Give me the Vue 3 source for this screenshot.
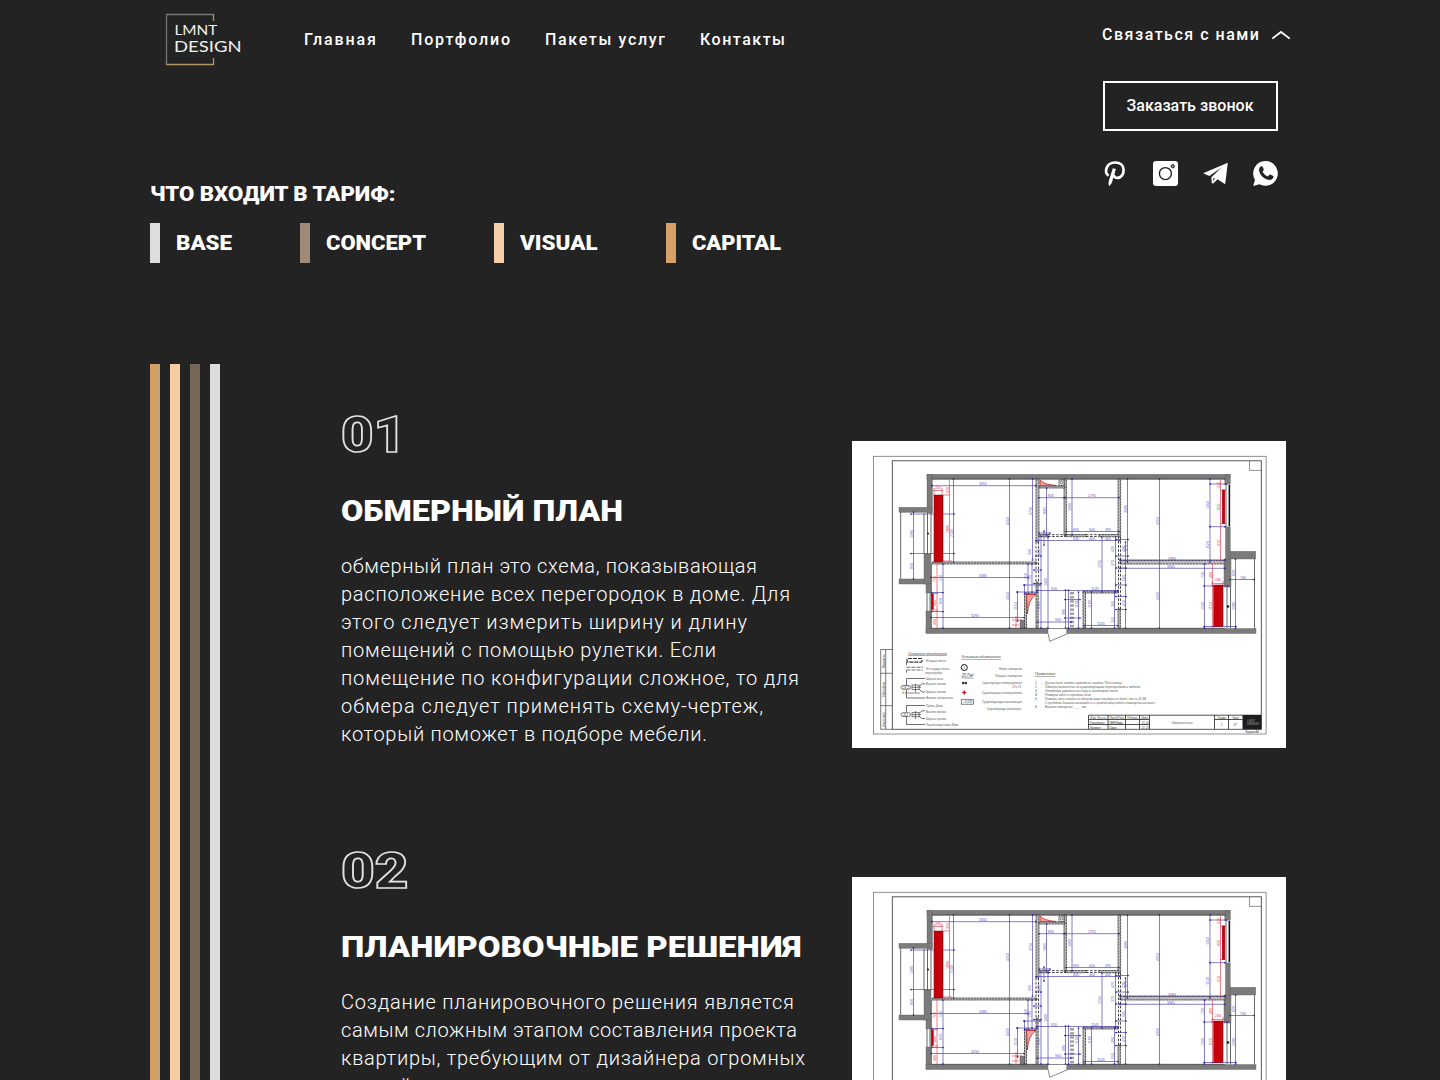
<script setup>
const nav = [
  { label: 'Главная', width: 72 },
  { label: 'Портфолио', width: 99 },
  { label: 'Пакеты услуг', width: 120 },
  { label: 'Контакты', width: 85 },
]

const tariffs = [
  { name: 'BASE', width: 56, gap: 68, tone: 'base' },
  { name: 'CONCEPT', width: 100, gap: 68, tone: 'concept' },
  { name: 'VISUAL', width: 77.5, gap: 68.5, tone: 'visual' },
  { name: 'CAPITAL', width: 89, gap: 0, tone: 'capital' },
]

const sections = [
  {
    number: '01',
    numberWidth: 65,
    title: 'ОБМЕРНЫЙ ПЛАН',
    titleWidth: 282,
    lines: [
      ['обмерный план это схема, показывающая', 416],
      ['расположение всех перегородок в доме. Для', 449],
      ['этого следует измерить ширину и длину', 406],
      ['помещений с помощью рулетки. Если', 375],
      ['помещение по конфигурации сложное, то для', 458],
      ['обмера следует применять схему-чертеж,', 422],
      ['который поможет в подборе мебели.', 366],
    ],
  },
  {
    number: '02',
    numberWidth: 67.5,
    title: 'ПЛАНИРОВОЧНЫЕ РЕШЕНИЯ',
    titleWidth: 460.5,
    lines: [
      ['Создание планировочного решения является', 453],
      ['самым сложным этапом составления проекта', 456],
      ['квартиры, требующим от дизайнера огромных', 464],
      ['усилий и затрат времени.', 262],
    ],
  },
]

// Fits a line of text to the given width, by letter spacing or by widening the glyphs.
const vFit = {
  mounted(el, { value, modifiers }) {
    el.style.width = 'auto'
    const natural = el.getBoundingClientRect().width
    el.style.width = `${value}px`
    if (modifiers.stretch) {
      el.style.transform = `scaleX(${value / natural})`
      return
    }
    const count = el.textContent.length - 1
    el.style.letterSpacing = `${(value - natural) / count}px`
  },
}

// Floor plan geometry: [x, y, width, height]
const walls = [
  [927, 474.3, 303, 4.7], [927, 474.3, 5, 38.7], [899, 507.3, 33, 5], [899, 579, 27, 5],
  [924, 554, 7, 30], [926, 584, 5, 9], [926, 611, 5, 22], [926, 628.5, 122, 5],
  [1067, 628.5, 189, 5], [1225.5, 474.3, 4.7, 10], [1225.5, 527, 4.7, 34],
  [1224, 559, 7, 28], [1230, 551.3, 25.7, 7.7], [1020, 620, 4.5, 9],
]
const thinWalls = [
  [1036, 479, 3, 63], [1064, 479, 2.4, 57], [1118, 479, 2.6, 58], [1039, 486, 26, 2],
  [1066, 534.5, 20, 2.2], [1099, 534.5, 20, 2.2], [1039, 534.5, 9, 2.2], [932, 562, 105, 2],
  [1120, 560.5, 105, 3.5], [1024.5, 593, 11, 1.5], [1024.5, 593, 2, 35], [1036, 582, 2.2, 46],
  [1083, 591, 35, 2], [1083, 592, 2.5, 36], [1118, 609, 2.4, 19],
]
const dashed = [
  [1036, 542, 1036, 583], [1038.5, 542, 1038.5, 583], [1118.5, 537, 1118.5, 609],
  [1120.5, 537, 1120.5, 609], [1071, 592, 1071, 628], [1073, 592, 1073, 628],
  [1048, 534.7, 1066, 534.7], [1048, 536.5, 1066, 536.5],
  [1086, 534.7, 1099, 534.7], [1086, 536.5, 1099, 536.5],
]
const dims = [
  [932, 485.7, 1036, 485.7], [953.5, 479, 953.5, 562], [1009.5, 479, 1009.5, 628],
  [1032.5, 479, 1032.5, 560], [913.5, 512, 913.5, 579], [911, 514, 954, 514], [911, 553.5, 954, 553.5],
  [931, 577.5, 1028, 577.5], [943, 564, 943, 628], [931, 617.5, 1024, 617.5],
  [932, 592.5, 943, 592.5], [932, 611.5, 943, 611.5], [1017.5, 592, 1017.5, 621],
  [1017, 592, 1037, 592], [1024.5, 585, 1024.5, 594], [1024, 585, 1040, 585],
  [1028, 564, 1028, 594], [1032, 564, 1032, 592], [1039, 497.7, 1064, 497.7],
  [1046.5, 488, 1046.5, 535], [1041, 536, 1041, 628], [1048, 537, 1048, 628],
  [1072, 479, 1072, 535], [1065, 497.7, 1119, 497.7], [1127.5, 479, 1127.5, 562],
  [1159.5, 479, 1159.5, 628], [1120, 568.3, 1225, 568.3], [1120, 559.9, 1225, 559.9],
  [1210, 479, 1210, 562], [1210, 484, 1226, 484], [1210, 526.7, 1225, 526.7],
  [1204.5, 564, 1204.5, 628], [1204, 586, 1228, 586], [1204, 626.5, 1236, 626.5],
  [1235.5, 559, 1235.5, 628], [1230, 579.5, 1254, 579.5], [1102, 537, 1102, 592],
  [1036, 540.5, 1120, 540.5], [1066, 531.5, 1119, 531.5], [1115.5, 537, 1115.5, 592],
  [1125.5, 542, 1125.5, 628], [1116, 539.5, 1128, 539.5], [1116, 556, 1128, 556],
  [1116, 568, 1126, 568], [1116, 585, 1126, 585], [1116, 596.5, 1126, 596.5],
  [1116, 609.5, 1126, 609.5], [1037, 590.5, 1118, 590.5], [1065.5, 590, 1065.5, 628],
  [1078.5, 592, 1078.5, 628], [1091.5, 592, 1091.5, 628], [1114.5, 592, 1114.5, 628],
  [1037, 622, 1071, 622], [1084, 625.5, 1118, 625.5], [1068.5, 590, 1068.5, 628],
  [1036, 556, 1041, 556], [1034, 570, 1041, 570], [1034, 583.5, 1041, 583.5],
  [1065, 599.5, 1080, 599.5], [1065, 618, 1080, 618], [1044, 531, 1044, 545], [1039, 533, 1050, 533],
]
const redDims = [
  [949.5, 479, 949.5, 562], [933, 490.5, 943, 490.5], [934, 488, 934, 496], [942, 488, 942, 496],
  [943, 495, 950, 495], [943, 561, 952, 561], [937, 563, 937, 628], [932, 593.5, 938, 593.5],
  [932, 610, 938, 610], [1220.5, 479, 1220.5, 562], [1220, 490, 1226, 490],
  [1220, 523.5, 1226, 523.5], [1212.5, 564, 1212.5, 628], [1212, 583.5, 1224, 583.5],
  [1212, 582, 1212, 587], [1223, 581, 1223, 587], [1210, 626.5, 1222, 626.5], [1012, 620, 1022, 620],
  [1016, 616, 1016, 628], [1012, 625, 1019, 625],
]
// [x, y, text, rotated]
const marks = [
  [983, 485, '3355'], [952.5, 533, '2190', 1], [1008.5, 521, '4350', 1], [1031.5, 511, '3750', 1],
  [912.5, 534, '1280', 1], [912.5, 566, '820', 1], [983, 576.8, '3385'], [975, 616.8, '3290'],
  [1008.5, 596, '4350', 1], [1016.5, 606, '1150', 1], [942, 601, '620', 1], [942, 578, '570', 1],
  [1051, 497, '835'], [1045.5, 511, '1665', 1], [1071, 507, '1900', 1], [1092, 497, '1795'],
  [1076, 530.8, '695'], [1092, 530.8, '600'], [1108, 530.8, '395'], [1076, 540, '435'],
  [1092, 540, '600'], [1108, 540, '445'], [1126.5, 509, '3080', 1], [1158.5, 521, '4350', 1],
  [1158.5, 596, '4350', 1], [1172, 559.5, '3380'], [1171, 567.8, '3365'],
  [1209, 505, '1350', 1], [1209, 545, '1120', 1], [1203.5, 575, '720', 1], [1203.5, 606, '1290', 1],
  [1234.5, 573, '620', 1], [1234.5, 606, '1280', 1], [1243, 578.7, '740'], [1101, 564, '1795', 1],
  [1054, 589.8, '920'], [1095, 590, '1145'], [1101, 624.8, '1145'], [1058, 621.3, '900'],
  [1077.5, 604, '1100', 1], [1090.5, 604, '1180', 1], [1047, 582, '1400', 1], [1040, 606, '1200', 1],
  [1124.5, 549, '420', 1], [1124.5, 578, '560', 1], [1124.5, 603, '410', 1], [1114, 549, '420', 1],
  [1114, 563, '370', 1], [1113.5, 604, '390', 1], [1113.5, 620, '550', 1], [1031, 552, '390', 1],
  [1040, 552, '430', 1], [1027, 576, '350', 1], [1031, 578, '700', 1], [1126.5, 548, '470', 1], [1064.5, 612, '980', 1],
]
const redMarks = [
  [948.5, 529, '1880', 1], [948.5, 490, '350', 1], [938, 489, '220'], [936, 579, '720', 1],
  [936, 603, '480', 1], [936, 622, '400', 1], [1219.5, 507, '850', 1], [1219.5, 543, '910', 1],
  [1211.5, 575, '480', 1], [1211.5, 606, '1150', 1], [1218, 581, '230'], [1219.5, 485, '310', 1],
]
const legendLabels = [
  [926, 661.5, 20, 'Несущая стена'], [926, 670, 24, 'Не несущая стена,'], [925, 673.8, 17, 'перегородка'],
  [926, 679.7, 17, 'Ширина окна'], [926, 685, 20, 'Высота проема'], [926, 693, 20, 'Ширина проема'],
  [926, 699, 27, 'Высота подоконника'], [926, 707, 17, 'Проём. Дверь'], [926, 712.5, 20, 'Высота проема'],
  [926, 720, 20, 'Ширина проема'], [926, 725.8, 32, 'Порог/выступ двери 50мм'],
  [999, 669.8, 23, 'Номер помещения'], [995, 677.2, 27, 'Площадь помещения'],
  [982, 684.2, 40, 'Существующая электрощитовая'], [1012, 688, 9, '1.8 x 1.8'], [982, 694.3, 40, 'Существующая электророзетка'],
  [982, 702.5, 40, 'Существующая канализация'], [987, 710.2, 34, 'Существующие радиаторы'],
]
const notes = [
  [683.5, 78, 'Данный лист читать совместно с листом “План помещ.”'],
  [687.6, 95, 'Обмеры выполнены по существующим перегородкам и мебели'],
  [691.5, 73, 'Отметки указаны по полу в чистовом плане'],
  [695.5, 46, 'Размеры стен и проемов даны'],
  [699.8, 101, 'Размеры окна и склада по обмерам выше плинтуса не более, чем на 25 ЭБ'],
  [703.6, 110, 'С проектом Заказчик ознакомлен и с проведением работ в помещении согласен'],
  [708, 41, 'Высота помещения _____ мм'],
]
</script>

<template>
  <div class="page">
    <header class="header">
      <svg class="logo" viewBox="0 0 80 56" width="80" height="56">
        <path d="M1.5 52V1.5" class="logo-gray" />
        <path d="M1 1.5H49" class="logo-gray" />
        <path d="M48.5 1.5V8M48.5 45V51.5M1 51.5H49" class="logo-gold" />
        <text x="9.4" y="22.3" font-size="12.6" textLength="43" lengthAdjust="spacingAndGlyphs">LMNT</text>
        <text x="9" y="39.3" font-size="16" textLength="67.5" lengthAdjust="spacingAndGlyphs">DESIGN</text>
      </svg>
      <nav class="nav">
        <a v-for="item in nav" :key="item.label" v-fit="item.width">{{ item.label }}</a>
      </nav>
      <div class="contact">
        <div class="contact-toggle">
          <span v-fit="157">Связаться с нами</span>
          <svg width="20" height="10" viewBox="0 0 20 10"><path d="M1.3 8.6 10 2l8.7 6.6" /></svg>
        </div>
        <button class="call"><span v-fit="127">Заказать звонок</span></button>
        <div class="socials">
          <svg viewBox="0 0 25 25">
            <path fill="none" stroke="#fff" stroke-width="2.7" d="M5.6 14.7C3.3 13.1 2.5 10.2 3.5 7.3 4.8 3.2 8.4 1.5 12.2 1.5 17.2 1.5 20.6 4.5 20.6 8.9 20.6 13.5 17.9 16.9 14.5 16.9 12.3 16.9 10.6 15.7 10.8 13.6" />
            <path d="M9.8 7.3 12.9 8.1 9 21.3Q8.2 23.6 6.1 25.2 5.2 22.5 5.8 20Z" />
          </svg>
          <svg viewBox="0 0 25 25">
            <rect width="25" height="25" rx="3.2" />
            <circle cx="12.4" cy="12.6" r="6" fill="none" stroke="#222" stroke-width="1.4" />
            <circle cx="19.8" cy="5.2" r="1.7" fill="#888" stroke="#222" stroke-width=".9" />
          </svg>
          <svg viewBox="0 0 25 25">
            <path d="M.2 12.3 24.8 1.8 22.2 23.2 14.5 18.2 10.2 22.6 8.8 22.3 8.4 16.2 18.6 6.6 6.4 14.9Z" />
            <path d="M9.9 16.7 10.1 20.7 12.3 17.3Z" fill="#777" />
          </svg>
          <svg viewBox="0 0 25 25">
            <path d="M12.6 0A12.4 12.4 0 1 1 6.5 23.3L.2 25 2 18.8A12.4 12.4 0 0 1 12.6 0Z" />
            <path fill="#222" d="M8.3 5.2c.7-.2 1.100.1 1.400.8l1 2.300c.2.500.1.900-.2 1.300l-1 1.200c1.300 2.300 3.100 3.900 5.400 4.800l1.300-1.600c.4-.5.900-.5 1.400-.3l2.300 1.100c.6.300.7.700.5 1.400-.6 2-2.500 3-4.600 2.600C10.900 17.900 7.100 14.300 6.100 9.700 5.800 7.600 6.700 5.700 8.300 5.200Z" />
          </svg>
        </div>
      </div>
    </header>

    <section class="tariffs">
      <h2 v-fit.stretch="245.5">ЧТО ВХОДИТ В ТАРИФ:</h2>
      <ul>
        <li v-for="t in tariffs" :key="t.name" :style="{ marginRight: `${t.gap}px` }">
          <i :class="t.tone"></i>
          <b v-fit.stretch="t.width">{{ t.name }}</b>
        </li>
      </ul>
    </section>

    <main class="content">
      <div class="stripes">
        <i class="capital"></i><i class="visual"></i><i class="concept"></i><i class="base"></i>
      </div>
      <div class="articles">
        <article v-for="s in sections" :key="s.number">
          <div class="copy">
            <div v-fit.stretch="s.numberWidth" class="number">{{ s.number }}</div>
            <h3 v-fit.stretch="s.titleWidth">{{ s.title }}</h3>
            <p>
              <span v-for="line in s.lines" :key="line[0]" v-fit="line[1]">{{ line[0] }}</span>
            </p>
          </div>
          <svg class="plan" viewBox="852 441 434 307" width="434" height="307">
            <rect x="852" y="441" width="434" height="307" fill="#fff" />
            <g fill="none" stroke="#777" stroke-width=".8">
              <rect x="873.4" y="456.3" width="392.7" height="277.7" />
              <path d="M1249.5 461V470.4H1261" />
            </g>
            <rect x="892.3" y="460.8" width="369" height="268.5" fill="none" stroke="#444" stroke-width=".9" />
            <g stroke="#222" stroke-width=".7" fill="none">
              <path d="M900.7 512V579M1254.5 559V628M924 513V554M927.5 513V554M931 513V554M1226 485V527M1229 485V527M1227 587V628M1230.5 587V628M927 593V611M930 593V611M932 479V513M931.3 564V628M1225 479V485" />
              <path d="M1048 633.5 1049.8 641.3 1068 633.5M1048 628.5H1067V633.5" stroke="#555" />
            </g>
            <path d="M1229.5 485V526" stroke="#111" stroke-width="1.3" />
            <g fill="#111"><circle cx="928" cy="533.5" r="1" /><circle cx="1228" cy="606.5" r="1.2" /></g>
            <g fill="#7b7b7b" stroke="#606060" stroke-width=".4">
              <rect v-for="(w, i) in walls" :key="i" :x="w[0]" :y="w[1]" :width="w[2]" :height="w[3]" />
            </g>
            <path d="M932 479.2H1225.5M931 628.3H1048M1067 628.3H1225" stroke="#222" stroke-width=".6" />
            <g fill="#bbb" stroke="#222" stroke-width=".7" stroke-dasharray="2.5 .5">
              <rect v-for="(w, i) in thinWalls" :key="i" :x="w[0]" :y="w[1]" :width="w[2]" :height="w[3]" />
            </g>
            <g stroke="#111" stroke-width=".8" stroke-dasharray="2.5 1.6">
              <line v-for="(d, i) in dashed" :key="i" :x1="d[0]" :y1="d[1]" :x2="d[2]" :y2="d[3]" />
            </g>
            <g stroke="#e04050" stroke-width=".65">
              <line v-for="(d, i) in redDims" :key="i" :x1="d[0]" :y1="d[1]" :x2="d[2]" :y2="d[3]" />
            </g>
            <g stroke="#4436ac" stroke-width=".65">
              <line v-for="(d, i) in dims" :key="i" :x1="d[0]" :y1="d[1]" :x2="d[2]" :y2="d[3]" />
            </g>
            <g fill="#28209a">
              <template v-for="(d, i) in dims" :key="i">
                <circle :cx="d[0]" :cy="d[1]" r=".85" /><circle :cx="d[2]" :cy="d[3]" r=".85" />
              </template>
            </g>
            <g fill="#c5000c" stroke="#870008" stroke-width=".5">
              <rect x="934" y="495" width="9" height="67" />
              <rect x="1213.7" y="585" width="9.3" height="41.5" />
              <rect x="931.5" y="594" width="1.8" height="15.5" />
              <rect x="1222.3" y="490" width="2.5" height="33.5" />
            </g>
            <g fill="#f5a0a0" stroke="#b02020" stroke-width=".7">
              <path d="M1040 480Q1044 484.5 1056.5 485.5H1040Z" /><path d="M1026.5 594.5H1036Q1028 600 1027.5 614Z" />
            </g>
            <g fill="#fff" stroke="#333" stroke-width=".7"><rect x="1059" y="480" width="5" height="5.5" /><circle cx="1061.5" cy="482.7" r="1.3" /></g>
            <g class="mark blue">
              <text v-for="(m, i) in marks" :key="i" :x="m[0]" :y="m[1]" :transform="m[3] ? `rotate(-90 ${m[0]} ${m[1]})` : null">{{ m[2] }}</text>
            </g>
            <g class="mark red">
              <text v-for="(m, i) in redMarks" :key="i" :x="m[0]" :y="m[1]" :transform="m[3] ? `rotate(-90 ${m[0]} ${m[1]})` : null">{{ m[2] }}</text>
            </g>

            <g fill="none" stroke="#444" stroke-width=".7">
              <path d="M892 649.5H880.7V729.3H892M885.7 649.5V729.3M880.7 673.3H892M880.7 705.7H892" />
              <g stroke="#333">
                <rect x="907" y="658.5" width="15" height="3.6" rx="1" stroke-width="1.2" stroke-dasharray="4 1" />
                <path d="M906.5 667.3H923M906.5 670H923" stroke-dasharray="4 1" />
                <path d="M906.5 662V665M906.5 670V672.5" />
                <path d="M906.5 685V678.5H925M906.5 690V698H925M919 686.5 922 683.8H925M919 689 922 692H925" />
                <path d="M906.5 712V705.5H925M906.5 717V724.5H925M919 713.5 922 710.8H925M919 716 922 718.5H925" />
              </g>
              <rect x="901" y="685.5" width="9.5" height="3.8" rx="1.9" /><rect x="901" y="712.7" width="9.5" height="3.8" rx="1.9" />
              <rect x="912" y="685" width="7" height="4.5" /><path d="M915.5 684V692M912 687.3H921" />
              <rect x="912" y="712.3" width="7" height="4.5" /><path d="M915.5 711V719M912 714.6H921" />
              <circle cx="964.3" cy="667.5" r="3" stroke="#111" stroke-width="1" />
              <rect x="961.3" y="699.7" width="12" height="4.5" />
            </g>
            <g fill="#222"><circle cx="963.2" cy="683" r="1.2" /><circle cx="965.8" cy="683" r="1.2" /></g>
            <path d="M964.3 690.5V694.5M962.3 692.5H966.3" stroke="#c01020" stroke-width="1.3" />
            <g class="note">
              <text x="908" y="654.5" font-size="4.2" textLength="39" text-decoration="underline">Условные обозначения</text>
              <text x="961.3" y="658" font-size="4.2" textLength="39.5" text-decoration="underline">Условные обозначения</text>
              <text x="961.5" y="676.8" font-size="4.5" textLength="12" text-decoration="underline">15,7 м²</text>
              <text x="963.2" y="669.2" font-size="4">1</text>
              <text x="963" y="703.3" font-size="3">+0,000</text>
              <text x="902" y="694.3" font-size="2.6">H подоконника</text>
              <text x="902.5" y="688.7" font-size="3">ОК-1</text>
              <text x="903.5" y="715.9" font-size="3">Д-1</text>
              <text v-for="(l, i) in legendLabels" :key="i" :x="l[0]" :y="l[1]" :textLength="l[2]" lengthAdjust="spacingAndGlyphs">{{ l[3] }}</text>
              <text x="1034.8" y="675" font-size="4.2" textLength="20.5" text-decoration="underline">Примечания</text>
              <template v-for="(n, i) in notes" :key="i">
                <text v-if="i !== 5" x="1035" :y="n[0]">{{ i > 5 ? 6 : i + 1 }}</text>
                <text x="1045" :y="n[0]" :textLength="n[1]" lengthAdjust="spacingAndGlyphs">{{ n[2] }}</text>
              </template>
              <text transform="translate(884.5 668) rotate(-90)" textLength="14">Взам. инв. №</text>
              <text transform="translate(884.5 697) rotate(-90)" textLength="15">Подп. и дата</text>
              <text transform="translate(884.5 727) rotate(-90)" textLength="15">Инв. № подл.</text>
            </g>
            <g fill="none" stroke="#222" stroke-width=".8">
              <path d="M1088.5 729V715.2H1261M1149.5 715V729M1108 715V729M1125.5 715V729M1139.5 715V729M1088.5 719.5H1149.5M1088.5 724.5H1149.5M1214.5 715V729M1228.5 715V729M1214.5 719.5H1242.5" />
            </g>
            <rect x="1242.5" y="715" width="19" height="14.3" fill="#1c1e1d" />
            <g class="note">
              <text x="1090" y="718.7" textLength="17">Изм. Кол.уч.</text><text x="1109" y="718.7" textLength="15">Лист N°док</text>
              <text x="1127" y="718.7" textLength="11">Подпись</text><text x="1141" y="718.7" textLength="7">Дата</text>
              <text x="1089.5" y="723.7" textLength="15">Разработал</text><text x="1109" y="723.7" textLength="14">ЛМНТ Дизайн</text>
              <text x="1089.5" y="728.5" textLength="11">Проверил</text><text x="1109" y="728.5" textLength="8">Смирн.</text>
              <text x="1141.5" y="723.7">11.20</text><text x="1141.5" y="728.5">11.20</text>
              <text x="1171.5" y="724" font-size="3.8" textLength="21" lengthAdjust="spacingAndGlyphs">Обмерный план</text>
              <text x="1217" y="718.7" textLength="9">Стадия</text><text x="1232" y="718.7" textLength="7">Лист</text>
              <text x="1220.7" y="726">1</text><text x="1233.5" y="726">07</text>
              <text x="1245" y="733" textLength="14">Формат А3</text>
              <g class="stamp"><text x="1247" y="721.5" font-size="3">LMNT</text><text x="1247" y="725" font-size="3.5" textLength="12">DESIGN</text></g>
            </g>
          </svg>
        </article>
      </div>
    </main>
  </div>
</template>

<style>
body { margin: 0; background: #232323; }
</style>

<style scoped>
.page {
  box-sizing: border-box;
  width: 1440px;
  height: 1080px;
  padding: 0 150px;
  overflow: hidden;
  display: flex;
  flex-direction: column;
  background: #232323;
  color: #fff;
  font-family: Roboto, "Noto Sans", sans-serif;
}
.header { flex: none; display: flex; height: 180px; }
.logo { flex: none; margin: 13px 0 0 15px; }
.logo path { fill: none; stroke-width: 1.3; }
.logo .logo-gray { stroke: #777; }
.logo .logo-gold { stroke: #b39669; }
.logo text { font-family: Lato, sans-serif; fill: #f0f0f0; }
.nav { display: flex; flex: none; gap: 35px; margin: 28px 0 0 59px; }
.nav a, .contact-toggle span, .call span { display: inline-block; flex: none; white-space: nowrap; font-size: 16px; line-height: 24px; font-weight: 500; }
.contact { flex: none; margin-left: 317px; }
.contact-toggle { display: flex; align-items: center; gap: 12px; margin-top: 23px; height: 24px; }
.contact-toggle path { fill: none; stroke: #fff; stroke-width: 1.8; }
.call {
  display: flex;
  align-items: center;
  justify-content: center;
  box-sizing: border-box;
  width: 175px;
  height: 50px;
  margin: 34px 0 30px 1px;
  padding: 0 1px 0 0;
  border: 2px solid #fff;
  background: transparent;
  color: #fff;
  font-family: inherit;
}
.socials { display: flex; gap: 25px; margin-left: 1px; }
.socials svg { width: 25px; height: 25px; fill: #fff; overflow: visible; }
.tariffs { flex: none; height: 184px; }
.tariffs h2 { display: inline-block; margin: 0 0 15px; font-size: 20px; line-height: 28px; font-weight: 900; white-space: nowrap; vertical-align: top; transform-origin: left; }
.tariffs ul { display: flex; margin: 0; padding: 0; list-style: none; }
.tariffs li { display: flex; align-items: center; gap: 16px; height: 40px; }
.tariffs i { width: 10px; height: 40px; }
.tariffs b { display: inline-block; white-space: nowrap; font-size: 20px; font-weight: 900; transform-origin: left; }
.base { background: #ddd; }
.concept { background: #9f8978; }
.visual { background: #f6cfa8; }
.capital { background: #d6a066; }
.content { flex: none; display: flex; height: 900px; }
.stripes { display: flex; gap: 10px; width: 191px; }
.stripes i { width: 10px; }
.stripes .concept { background: #776759; }
.stripes .visual { background: #f5cda2; }
.stripes .capital { background: linear-gradient(90deg, #d89e60 35%, #c2a177); }
.articles { width: 945px; }
article { box-sizing: border-box; height: 436px; padding-top: 41px; display: flex; }
.copy { width: 511px; }
.copy > * { white-space: nowrap; }
.number {
  float: left;
  font-size: 50px;
  line-height: 61px;
  height: 60px;
  font-weight: 900;
  color: transparent;
  -webkit-text-stroke: 1.6px #e2e2e2;
  transform-origin: left;
}
h3 { float: left; clear: left; margin: 28px 0 23px; font-size: 30px; line-height: 36px; font-weight: 900; transform-origin: left; }
p { clear: left; margin: 0; font-size: 20px; line-height: 28px; font-weight: 350; }
p span { float: left; clear: left; }
.plan { margin-top: 36px; flex: none; }
.mark { font-size: 3.6px; text-anchor: middle; font-family: "Liberation Sans", sans-serif; }
.blue { fill: #6358b8; }
.red { fill: #dd3040; }
.note { font-size: 3.3px; font-style: italic; font-family: "Liberation Sans", sans-serif; fill: #555; }
.stamp { fill: #999; }
</style>
